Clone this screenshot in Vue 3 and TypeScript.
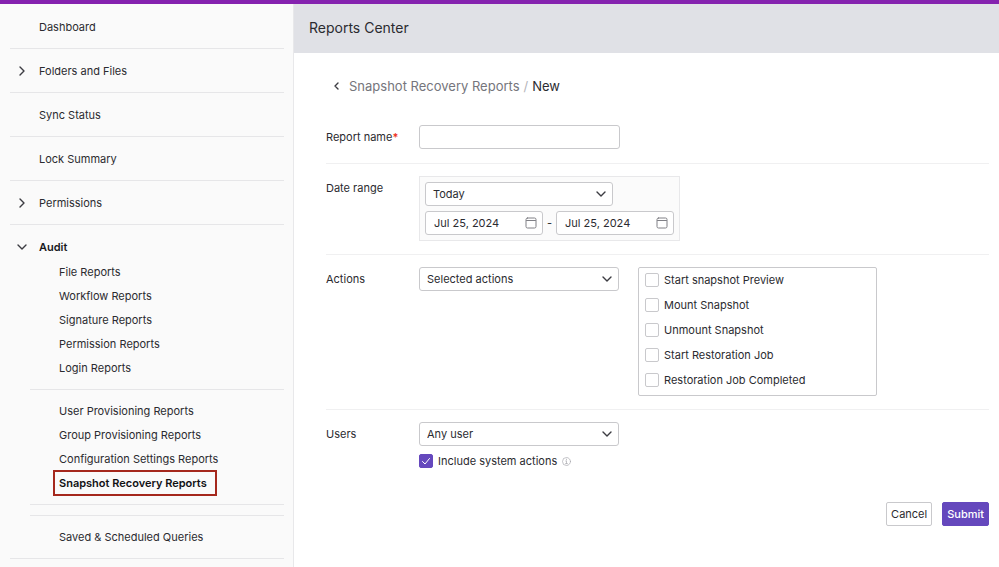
<script setup lang="ts">
import { ref } from 'vue'

interface NavItem {
  label: string
  expandable?: boolean
}

const topItems: NavItem[] = [
  { label: 'Dashboard' },
  { label: 'Folders and Files', expandable: true },
  { label: 'Sync Status' },
  { label: 'Lock Summary' },
  { label: 'Permissions', expandable: true },
]

const auditGroups: string[][] = [
  ['File Reports', 'Workflow Reports', 'Signature Reports', 'Permission Reports', 'Login Reports'],
  [
    'User Provisioning Reports',
    'Group Provisioning Reports',
    'Configuration Settings Reports',
    'Snapshot Recovery Reports',
  ],
  [],
  ['Saved & Scheduled Queries'],
]

const currentPage = 'Snapshot Recovery Reports'

const actions = [
  'Start snapshot Preview',
  'Mount Snapshot',
  'Unmount Snapshot',
  'Start Restoration Job',
  'Restoration Job Completed',
]

const reportName = ref('')
const range = ref('Today')
const fromDate = ref('Jul 25, 2024')
const toDate = ref('Jul 25, 2024')
const actionMode = ref('Selected actions')
const chosenActions = ref<string[]>([])
const userMode = ref('Any user')
const includeSystem = ref(true)
</script>

<template>
  <div class="page">
    <nav class="sidebar" aria-label="Main">
      <ul class="menu">
        <li v-for="item in topItems" :key="item.label" class="menu-item">
          <a href="#" class="menu-link">
            <span class="marker">
              <svg v-if="item.expandable" width="8" height="12" viewBox="0 0 8 12" aria-hidden="true">
                <path d="M2 2l4 4-4 4" />
              </svg>
            </span>
            {{ item.label }}
          </a>
        </li>
        <li class="menu-item">
          <a href="#" class="menu-link open">
            <span class="marker">
              <svg width="12" height="8" viewBox="0 0 12 8" aria-hidden="true">
                <path d="M2 2l4 4 4-4" />
              </svg>
            </span>
            Audit
          </a>
          <ul v-for="(group, i) in auditGroups" :key="i" class="submenu">
            <li v-for="name in group" :key="name">
              <a href="#" class="sub-link" :class="{ current: name === currentPage }">{{ name }}</a>
            </li>
          </ul>
        </li>
      </ul>
    </nav>

    <main class="content">
      <header class="titlebar"><h1>Reports Center</h1></header>

      <form class="form" @submit.prevent>
        <div class="crumbs">
          <a href="#" class="back" aria-label="Back">
            <svg width="6" height="8" viewBox="0 0 6 8" aria-hidden="true"><path d="M4 1L1 4l3 3" /></svg>
          </a>
          <a href="#" class="parent">Snapshot Recovery Reports</a>
          <span class="slash">/</span>
          <span>New</span>
        </div>

        <div class="row">
          <label class="label" for="report-name">Report name<span class="required">*</span></label>
          <input id="report-name" v-model="reportName" class="box text-input" type="text" />
        </div>

        <div class="row">
          <label class="label" for="range">Date range</label>
          <div class="range-panel">
            <span class="select range-select">
              <select id="range" v-model="range" class="box">
                <option>Today</option>
              </select>
              <svg class="arrow" width="12" height="8" viewBox="0 0 12 8" aria-hidden="true"><path d="M2 2l4 4 4-4" /></svg>
            </span>
            <div class="dates">
              <span class="box date">
                <input v-model="fromDate" type="text" aria-label="From" />
                <button type="button" aria-label="Pick start date">
                  <svg width="12" height="12" viewBox="0 0 12 12" aria-hidden="true">
                    <rect x="1" y="1" width="10" height="10" rx="1.5" /><path d="M1.500 3.500h9" />
                  </svg>
                </button>
              </span>
              <span>-</span>
              <span class="box date">
                <input v-model="toDate" type="text" aria-label="To" />
                <button type="button" aria-label="Pick end date">
                  <svg width="12" height="12" viewBox="0 0 12 12" aria-hidden="true">
                    <rect x="1" y="1" width="10" height="10" rx="1.5" /><path d="M1.500 3.500h9" />
                  </svg>
                </button>
              </span>
            </div>
          </div>
        </div>

        <div class="row">
          <label class="label" for="actions">Actions</label>
          <div class="actions">
            <span class="select">
              <select id="actions" v-model="actionMode" class="box">
                <option>Selected actions</option>
              </select>
              <svg class="arrow" width="12" height="8" viewBox="0 0 12 8" aria-hidden="true"><path d="M2 2l4 4 4-4" /></svg>
            </span>
            <div class="checklist">
              <label v-for="name in actions" :key="name" class="check">
                <span class="tick">
                  <input v-model="chosenActions" type="checkbox" :value="name" />
                  <svg width="14" height="14" viewBox="0 0 14 14" aria-hidden="true"><path d="M3.500 7.500L6 10l4.500-5.500" /></svg>
                </span>
                {{ name }}
              </label>
            </div>
          </div>
        </div>

        <div class="row">
          <label class="label" for="users">Users</label>
          <div class="users">
            <span class="select">
              <select id="users" v-model="userMode" class="box">
                <option>Any user</option>
              </select>
              <svg class="arrow" width="12" height="8" viewBox="0 0 12 8" aria-hidden="true"><path d="M2 2l4 4 4-4" /></svg>
            </span>
            <label class="check">
              <span class="tick">
                <input v-model="includeSystem" type="checkbox" />
                <svg width="14" height="14" viewBox="0 0 14 14" aria-hidden="true"><path d="M3.500 7.500L6 10l4.500-5.500" /></svg>
              </span>
              Include system actions
              <svg class="info" width="9" height="9" viewBox="0 0 9 9" aria-hidden="true">
                <circle cx="4.500" cy="4.500" r="4" /><path d="M3.700 4h.8v2.600M3.500 6.600h2M4.500 2.100v.9" />
              </svg>
            </label>
          </div>
        </div>

        <div class="buttons">
          <button type="button" class="button">Cancel</button>
          <button type="submit" class="button primary">Submit</button>
        </div>
      </form>
    </main>
  </div>
</template>

<style>
body {
  margin: 0;
}
</style>

<style scoped>
.page {
  display: flex;
  box-sizing: border-box;
  min-height: 100vh;
  border-top: 4px solid #8522af;
  background: #fff;
  color: #2b2b30;
  font: 11px/16px Inter, "Liberation Sans", sans-serif;
}

a {
  color: inherit;
  text-decoration: none;
}

ul {
  margin: 0;
  padding: 0;
  list-style: none;
}

svg {
  fill: none;
  stroke: #3c3c42;
  stroke-width: 1.4;
  stroke-linecap: round;
  stroke-linejoin: round;
}

input,
select,
button {
  box-sizing: border-box;
  margin: 0;
  font: inherit;
  color: inherit;
}

.sidebar {
  box-sizing: border-box;
  flex: 0 0 294px;
  padding: 1px 9px 0 10px;
  border-right: 1px solid #e8e8ea;
  background: #fafafa;
}

.menu-item {
  border-bottom: 1px solid #e6e6e8;
}

.menu-link {
  display: flex;
  align-items: center;
  height: 43px;
}

.marker {
  display: flex;
  justify-content: center;
  width: 24px;
  margin-right: 5px;
}

.open {
  color: #18181c;
  font-weight: 600;
}

.submenu {
  margin-left: 20px;
  padding: 9px 0;
  border-top: 1px solid #e6e6e8;
}

.menu-link + .submenu {
  padding-top: 0;
  margin-top: -8px;
  border-top: 0;
}

.submenu:not(:has(li)) {
  padding: 5px 0;
}

.sub-link {
  position: relative;
  display: inline-block;
  margin-left: 29px;
  line-height: 24px;
  vertical-align: top;
}

.current {
  color: #111114;
  font-weight: 600;
}

.current::after {
  content: "";
  position: absolute;
  inset: -1px -10px -1px -6px;
  border: 2px solid #a5281d;
}

.content {
  flex: 1;
  min-width: 0;
}

.titlebar {
  box-sizing: border-box;
  display: flex;
  align-items: center;
  height: 49px;
  padding: 0 15px 2px;
  background: #e0e1e6;
}

h1 {
  margin: 0;
  font-size: 14px;
  font-weight: 400;
  line-height: 20px;
}

.form {
  padding: 23px 10px 40px 32px;
}

.crumbs {
  display: flex;
  align-items: center;
  gap: 4px;
  margin-bottom: 17px;
  padding-left: 8px;
  font-size: 13px;
  line-height: 20px;
}

.back {
  display: flex;
  margin-right: 5px;
}

.parent {
  color: #75757c;
}

.slash {
  color: #b5b5ba;
}

.row {
  display: flex;
  align-items: flex-start;
  padding: 12px 0 13px;
}

.row + .row {
  border-top: 1px solid #f0f0f1;
}

.label {
  flex: 0 0 93px;
  padding: 4px 0 5px;
}

.required {
  color: #ee3124;
  font-weight: 600;
}

.box {
  height: 24px;
  border: 1px solid #c9c9cc;
  border-radius: 3px;
  background: #fff;
}

.text-input {
  width: 201px;
  padding: 0 7px;
}

.select {
  display: grid;
  align-items: center;
  flex: 0 0 200px;
  width: 200px;
}

.select > * {
  grid-area: 1 / 1;
}

.select select {
  appearance: none;
  width: 100%;
  padding: 0 24px 0 7px;
}

.arrow {
  justify-self: end;
  margin-right: 6px;
  pointer-events: none;
}

.range-panel {
  display: grid;
  gap: 5px;
  padding: 5px;
  border: 1px solid #e8e8ea;
  background: #fbfbfb;
}

.select.range-select {
  width: 188px;
}

.dates {
  display: flex;
  align-items: center;
  gap: 4px;
}

.date {
  box-sizing: border-box;
  display: flex;
  align-items: center;
  width: 118px;
  padding: 0 5px 0 8px;
}

.date input {
  flex: 1;
  min-width: 0;
  padding: 0;
  border: 0;
  background: none;
}

.date button {
  display: flex;
  padding: 0;
  border: 0;
  background: none;
}

.date svg {
  stroke: #808086;
  stroke-width: 1;
}

.actions {
  display: flex;
  align-items: flex-start;
  gap: 19px;
}

.checklist {
  box-sizing: border-box;
  display: grid;
  gap: 9px;
  width: 239px;
  padding: 4px 6px 7px;
  border: 1px solid #c9c9cc;
  border-radius: 2px;
}

.check {
  display: flex;
  align-items: center;
  gap: 5px;
}

.tick {
  display: grid;
}

.tick > * {
  grid-area: 1 / 1;
}

.tick input {
  appearance: none;
  width: 14px;
  height: 14px;
  border: 1px solid #c9c9cc;
  border-radius: 2px;
  background: #fff;
}

.tick input:checked {
  border-color: #6548bd;
  background: #6548bd;
}

.tick svg {
  stroke: #fff;
  stroke-width: 1;
  visibility: hidden;
  pointer-events: none;
}

.tick input:checked + svg {
  visibility: visible;
}

.users {
  display: grid;
  gap: 7px;
}

.info {
  stroke: #aaaab0;
  stroke-width: 0.7;
}

.buttons {
  display: flex;
  justify-content: flex-end;
  gap: 10px;
  margin-top: 20px;
}

.button {
  height: 24px;
  padding: 0 4px;
  border: 1px solid #c9c9cc;
  border-radius: 2px;
  background: #fff;
}

.primary {
  border-color: #6548bd;
  background: #6548bd;
  color: #fff;
  font-weight: 500;
}
</style>
